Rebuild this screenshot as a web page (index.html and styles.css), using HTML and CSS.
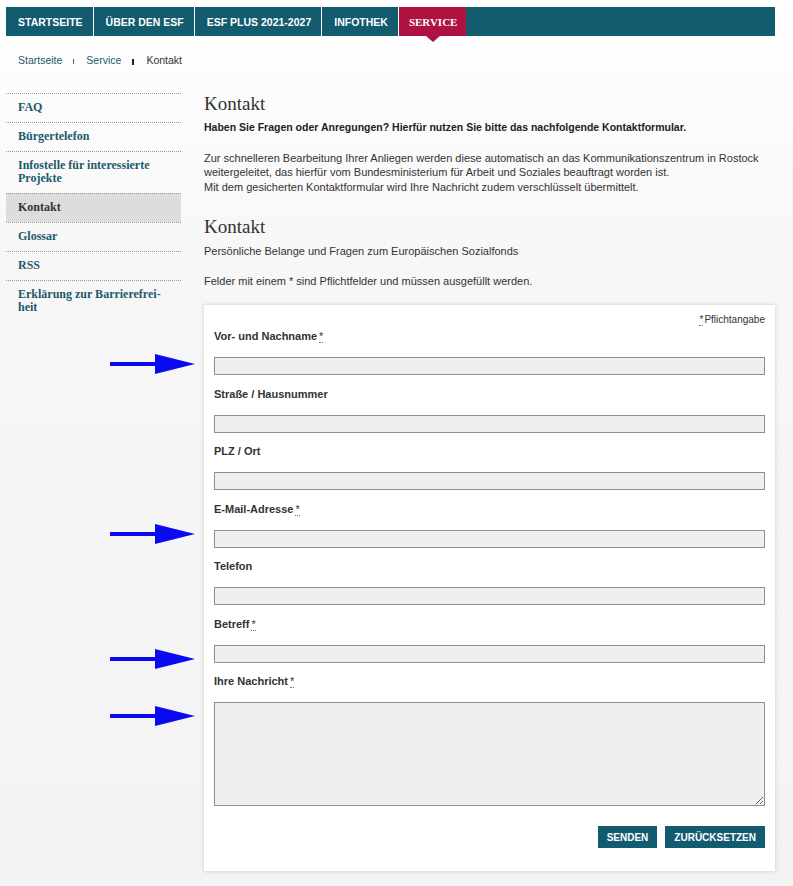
FILE: index.html
```html
<!DOCTYPE html>
<html lang="de">
<head>
    <meta charset="UTF-8">
    <title>Kontakt - ESF</title>
    <link rel="stylesheet" href="styles.css">
</head>
<body>
<div class="page">
    <nav class="mainnav">
        <a href="#">Startseite</a>
        <a href="#">Über den ESF</a>
        <a href="#">ESF Plus 2021-2027</a>
        <a href="#">Infothek</a>
        <a href="#" class="active">Service</a>
    </nav>

    <div class="breadcrumb">
        <a href="#">Startseite</a>
        <span class="sep"></span>
        <a href="#">Service</a>
        <span class="sep strong"></span>
        <span class="current">Kontakt</span>
    </div>

    <div class="layout">
        <ul class="subnav">
            <li><a href="#">FAQ</a></li>
            <li><a href="#">Bürgertelefon</a></li>
            <li><a href="#">Infostelle für interessierte Projekte</a></li>
            <li class="active"><a href="#">Kontakt</a></li>
            <li><a href="#">Glossar</a></li>
            <li><a href="#">RSS</a></li>
            <li><a href="#">Erklärung zur Barrierefrei-<br>heit</a></li>
        </ul>

        <main class="content">
            <h1>Kontakt</h1>
            <p class="lead">Haben Sie Fragen oder Anregungen? Hierfür nutzen Sie bitte das nachfolgende Kontaktformular.</p>
            <p>Zur schnelleren Bearbeitung Ihrer Anliegen werden diese automatisch an das Kommunikationszentrum in Rostock weitergeleitet, das hierfür vom Bundesministerium für Arbeit und Soziales beauftragt worden ist.<br>
            Mit dem gesicherten Kontaktformular wird Ihre Nachricht zudem verschlüsselt übermittelt.</p>

            <h2>Kontakt</h2>
            <p class="intro">Persönliche Belange und Fragen zum Europäischen Sozialfonds</p>
            <p>Felder mit einem * sind Pflichtfelder und müssen ausgefüllt werden.</p>

            <form class="form-card">
                <div class="required-note"><abbr title="Pflichtangabe">*</abbr>Pflichtangabe</div>

                <div class="field">
                    <span class="arrow"></span>
                    <label for="name">Vor- und Nachname<abbr title="Pflichtangabe">*</abbr></label>
                    <input type="text" id="name">
                </div>
                <div class="field">
                    <label for="street">Straße / Hausnummer</label>
                    <input type="text" id="street">
                </div>
                <div class="field">
                    <label for="city">PLZ / Ort</label>
                    <input type="text" id="city">
                </div>
                <div class="field">
                    <span class="arrow up"></span>
                    <label for="email">E-Mail-Adresse<abbr title="Pflichtangabe">*</abbr></label>
                    <input type="text" id="email">
                </div>
                <div class="field">
                    <label for="phone">Telefon</label>
                    <input type="text" id="phone">
                </div>
                <div class="field">
                    <span class="arrow down"></span>
                    <label for="subject">Betreff<abbr title="Pflichtangabe">*</abbr></label>
                    <input type="text" id="subject">
                </div>
                <div class="field last">
                    <span class="arrow down"></span>
                    <label for="message">Ihre Nachricht<abbr title="Pflichtangabe">*</abbr></label>
                    <textarea id="message"></textarea>
                </div>

                <div class="buttons">
                    <button type="submit">Senden</button>
                    <button type="reset">Zurücksetzen</button>
                </div>
            </form>
        </main>
    </div>
</div>
</body>
</html>
```

FILE: styles.css
```css
body {
    margin: 0;
    font-family: 'Liberation Sans', Arial, sans-serif;
    font-size: 11px;
    color: #333333;
    background: linear-gradient(180deg, #ffffff 0px, #f7f7f7 250px, #f3f3f3 100%);
    min-height: 886px;
}

.page {
    width: 769px;
    margin-left: 6px;
    padding-top: 7px;
}

/* top navigation */
.mainnav {
    display: flex;
    height: 29px;
    background-color: #135b6e;
}

.mainnav a {
    position: relative;
    display: flex;
    align-items: center;
    padding: 0 10px 0 12px;
    border-right: 1px solid #ffffff;
    color: #ffffff;
    font-weight: bold;
    font-size: 10.5px;
    text-transform: uppercase;
    text-decoration: none;
}

.mainnav a.active {
    padding: 0 9px 0 10px;
    background-color: #ae1240;
    font-family: 'Liberation Serif', serif;
    font-size: 11px;
    border-right: none;
}

.mainnav a.active::after {
    content: '';
    position: absolute;
    left: 50%;
    bottom: -6px;
    margin-left: -7px;
    border-left: 7px solid transparent;
    border-right: 7px solid transparent;
    border-top: 6px solid #ae1240;
}

/* breadcrumb */
.breadcrumb {
    display: flex;
    align-items: center;
    height: 16px;
    margin-top: 16px;
    padding-left: 12px;
    font-size: 10.5px;
}

.breadcrumb a {
    color: #1d5a6b;
    text-decoration: none;
}

.breadcrumb .sep {
    display: inline-block;
    width: 1px;
    height: 5px;
    margin: 3px 12px 0 11px;
    background-color: #555555;
}

.breadcrumb .sep.strong {
    width: 2px;
    height: 6px;
    background-color: #222222;
}

.breadcrumb .current {
    color: #333333;
}

/* two columns */
.layout {
    display: grid;
    grid-template-columns: 175px 1fr;
    column-gap: 23px;
    margin-top: 25px;
}

.subnav {
    list-style: none;
    margin: 0;
    padding: 0;
}

.subnav li {
    border-top: 1px dotted #9a9a9a;
}

.subnav a {
    display: block;
    padding: 7px 12px 8px;
    font-family: 'Liberation Serif', serif;
    font-weight: bold;
    font-size: 12px;
    line-height: 13px;
    color: #1d5a6b;
    text-decoration: none;
}

.subnav li.active {
    background-color: #dddddd;
}

.subnav li.active a {
    color: #333333;
}

/* content */
.content h1, .content h2 {
    margin: 0;
    font-family: 'Liberation Serif', serif;
    font-weight: normal;
    font-size: 19px;
    line-height: 22px;
    color: #333333;
}

.content h2 {
    margin-top: 22px;
}

.content p {
    margin: 0;
    line-height: 14.5px;
}

.content p.lead {
    margin-top: 5px;
    margin-bottom: 16px;
    font-weight: bold;
    font-size: 10.5px;
    color: #222222;
}

.content p.intro {
    margin-top: 6px;
    margin-bottom: 15px;
}

/* form */
.form-card {
    margin-top: 17px;
    padding: 9px 10px 23px;
    background-color: #ffffff;
    box-shadow: 0 0 4px rgba(0, 0, 0, 0.18);
}

.required-note {
    margin-bottom: 2px;
    text-align: right;
    font-size: 10px;
    line-height: 12px;
}

abbr {
    text-decoration: none;
    border-bottom: 1px dotted #777777;
    margin-left: 2px;
    font-weight: normal;
}

.required-note abbr {
    margin: 0 1px 0 0;
}

.field {
    position: relative;
    margin-bottom: 10.5px;
}

.field.last {
    margin-bottom: 0;
}

.field label {
    display: block;
    height: 29px;
    font-weight: bold;
    line-height: 16px;
    color: #333333;
}

.field input, .field textarea {
    display: block;
    box-sizing: border-box;
    width: 100%;
    height: 18px;
    margin: 0;
    border: 1px solid #8f8f8f;
    background-color: #efefef;
}

.field textarea {
    height: 104px;
    resize: vertical;
}

/* blue marker arrows beside the required fields */
.arrow {
    position: absolute;
    left: -104px;
    top: 26px;
    width: 85px;
    height: 20px;
}

.arrow.up {
    top: 23px;
}

.arrow.down {
    top: 33px;
}

.arrow::before {
    content: '';
    position: absolute;
    left: 0;
    top: 8px;
    width: 47px;
    height: 4px;
    background-color: #0a0af0;
}

.arrow::after {
    content: '';
    position: absolute;
    right: 0;
    top: 0;
    border-top: 10px solid transparent;
    border-bottom: 10px solid transparent;
    border-left: 40px solid #0a0af0;
}

.buttons {
    display: flex;
    justify-content: flex-end;
    gap: 8px;
    margin-top: 20px;
}

.buttons button {
    height: 22px;
    padding: 0 9px;
    border: none;
    background-color: #135b6e;
    color: #ffffff;
    font-family: 'Liberation Sans', Arial, sans-serif;
    font-weight: bold;
    font-size: 10px;
    text-transform: uppercase;
    cursor: pointer;
}
```
